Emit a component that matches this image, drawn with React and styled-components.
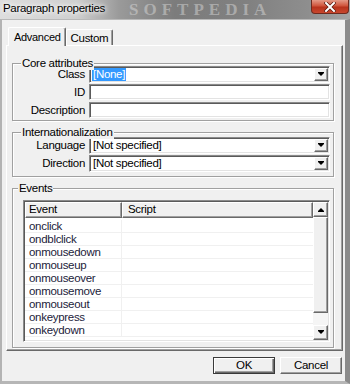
import React from 'react';
import styled, { createGlobalStyle } from 'styled-components';

const GlobalStyle = createGlobalStyle`
  html, body {
    margin: 0;
    padding: 0;
    background: #f0f0f0;
  }
  * {
    box-sizing: border-box;
  }
`;

// Window chrome
const Window = styled.div`
  width: 350px;
  height: 384px;
  display: flex;
  flex-direction: column;
  font-family: "Liberation Sans", Arial, sans-serif;
  font-size: 11px;
  letter-spacing: -0.3px;
  color: #000;
  overflow: hidden;
`;

const TitleBar = styled.div`
  height: 19px;
  flex: none;
  display: flex;
  align-items: flex-start;
  background: linear-gradient(90deg, #dedede 0%, #cfcfcf 22%, #9a9a9a 34%, #7c7c7c 50%, #808080 70%, #8e8e8e 88%, #a4a4a4 100%);
  overflow: hidden;
`;

const Title = styled.span`
  font-size: 11.5px;
  letter-spacing: -0.3px;
  line-height: 16px;
  padding-left: 3px;
  color: #000;
  text-shadow: 0 0 4px #fff, 0 0 6px #fff;
  white-space: nowrap;
`;

const Watermark = styled.span`
  margin-left: 24px;
  font-family: "Liberation Serif", serif;
  font-weight: bold;
  font-size: 17px;
  line-height: 19px;
  letter-spacing: 5px;
  color: rgba(225, 225, 225, 0.45);
  white-space: nowrap;
`;

const CloseButton = styled.div`
  margin-left: auto;
  margin-right: 1px;
  width: 38px;
  height: 14px;
  border: 1px solid #6e2a1e;
  border-top: none;
  border-radius: 0 0 4px 4px;
  background: linear-gradient(180deg, #e49a87 0%, #d0553c 45%, #b8331c 55%, #c8472e 100%);
  display: flex;
  align-items: center;
  justify-content: center;
  flex: none;
`;

const Body = styled.div`
  flex: 1;
  display: flex;
  flex-direction: column;
  background: #f0f0f0;
  border-top: 1px solid #b9b9b9;
  border-left: 2px solid #b3b3b3;
  border-right: 5px solid #8b8b8b;
  border-bottom: 3px solid #b6b6b6;
  padding: 7px 2px 0 4px;
  min-height: 0;
`;

// Tabs
const TabRow = styled.div`
  display: flex;
  align-items: flex-end;
  height: 18px;
  padding-left: 2px;
  position: relative;
  z-index: 1;
`;

const Tab = styled.div`
  height: ${p => (p.$active ? '19px' : '16px')};
  margin-bottom: ${p => (p.$active ? '-1px' : '0')};
  padding: ${p => (p.$active ? '2px 4px 0 5px' : '1px 4px 0 4px')};
  background: #f0f0f0;
  border-top: 1px solid #fff;
  border-left: 1px solid #fff;
  border-right: 1px solid #696969;
  box-shadow: inset -1px 0 0 #a0a0a0;
  border-radius: 2px 2px 0 0;
  line-height: 14px;
  font-size: ${p => (p.$active ? '11px' : '11.5px')};
  white-space: nowrap;
`;

const Panel = styled.div`
  flex: 1;
  display: flex;
  flex-direction: column;
  border: 1px solid;
  border-color: #fff #696969 #696969 #fff;
  box-shadow: inset -1px -1px 0 #a0a0a0;
  padding: 17px 8px 2px 5px;
  min-height: 0;
`;

// Group boxes
const GroupBox = styled.div`
  position: relative;
  border: 1px solid #a0a0a0;
  box-shadow: inset 1px 1px 0 #fff, 1px 1px 0 #fff;
  padding: ${p => p.$pad};
  margin-top: ${p => p.$gap || '0px'};
  display: flex;
  flex-direction: column;
  flex: ${p => (p.$grow ? 1 : 'none')};
  min-height: 0;
`;

const Caption = styled.span`
  position: absolute;
  top: -7px;
  left: ${p => p.$left || '7px'};
  padding: 0 1px 0 1px;
  background: #f0f0f0;
  line-height: 13px;
  font-size: 11.5px;
`;

const FormGrid = styled.div`
  display: grid;
  grid-template-columns: 72px 1fr;
  column-gap: 4px;
  row-gap: ${p => p.$rowGap || '1px'};
  align-items: center;
`;

const Label = styled.label`
  text-align: right;
  font-size: 11.5px;
  line-height: 13px;
  white-space: nowrap;
`;

const FieldBox = styled.div`
  height: ${p => p.$h || '17px'};
  background: #fff;
  border: 1px solid;
  border-color: #8a8a8a #fff #fff #8a8a8a;
  box-shadow: inset 1px 1px 0 #5a5a5a, inset -1px -1px 0 #e3e3e3;
  display: flex;
  align-items: center;
  padding: 0 1px 0 2px;
  font-size: 11.5px;
  line-height: 13px;
  white-space: nowrap;
  overflow: hidden;
`;

const Highlight = styled.span`
  background: #3399ff;
  color: #fff;
  padding: 0 1px;
`;

const FieldText = styled.span`
  flex: 1;
  padding-left: 1px;
`;

const DropButton = styled.div`
  margin-left: auto;
  width: 14px;
  height: 13px;
  flex: none;
  background: #f0f0f0;
  border: 1px solid;
  border-color: #fff #696969 #696969 #fff;
  box-shadow: inset -1px -1px 0 #a0a0a0;
  display: flex;
  align-items: center;
  justify-content: center;
`;

const Arrow = styled.span`
  width: 0;
  height: 0;
  border-left: 3px solid transparent;
  border-right: 3px solid transparent;
  ${p => (p.$up ? 'border-bottom: 3px solid #000;' : 'border-top: 3px solid #000;')}
  position: relative;
  &::after {
    content: '';
    position: absolute;
    left: -3px;
    ${p => (p.$up ? 'top: 3px;' : 'top: -4px;')}
    width: 6px;
    height: 1px;
    background: #000;
  }
`;

// List view
const ListView = styled.div`
  flex: 1;
  display: flex;
  background: #fff;
  border: 1px solid;
  border-color: #8a8a8a #fff #fff #8a8a8a;
  box-shadow: inset 1px 1px 0 #5a5a5a, inset -1px -1px 0 #e3e3e3;
  padding: 1px;
  min-height: 0;
  overflow: hidden;
`;

const Table = styled.div`
  flex: 1;
  display: flex;
  flex-direction: column;
  min-width: 0;
`;

const HeaderRow = styled.div`
  display: grid;
  grid-template-columns: 97px 1fr;
  height: 16px;
  flex: none;
`;

const HeaderCell = styled.div`
  background: #f0f0f0;
  border: 1px solid;
  border-color: #fff #696969 #696969 #fff;
  box-shadow: inset -1px -1px 0 #a0a0a0;
  padding-left: ${p => p.$pl || '3px'};
  line-height: 13px;
  font-size: 11.5px;
`;

const Rows = styled.div`
  display: flex;
  flex-direction: column;
  padding-top: 2px;
`;

const Row = styled.div`
  display: grid;
  grid-template-columns: 97px 1fr;
  height: 13px;
  flex: none;
  border-bottom: 1px solid #f0f0f0;
`;

const Cell = styled.div`
  padding-left: 4px;
  line-height: 13px;
  font-size: 11.5px;
  color: #22223a;
  border-right: ${p => (p.$first ? '1px solid #f0f0f0' : 'none')};
  white-space: nowrap;
`;

const ScrollBar = styled.div`
  width: 15px;
  flex: none;
  display: flex;
  flex-direction: column;
  background: #f4f4f4;
`;

const ScrollButton = styled.div`
  height: 15px;
  flex: none;
  background: #f0f0f0;
  border: 1px solid;
  border-color: #fff #696969 #696969 #fff;
  box-shadow: inset -1px -1px 0 #a0a0a0;
  display: flex;
  align-items: center;
  justify-content: center;
`;

const Thumb = styled.div`
  height: ${p => p.$h}px;
  flex: none;
  background: #f0f0f0;
  border: 1px solid;
  border-color: #fff #696969 #696969 #fff;
  box-shadow: inset -1px -1px 0 #a0a0a0;
`;

const Track = styled.div`
  flex: 1;
  background: #f5f5f5;
`;

// Footer buttons
const Footer = styled.div`
  height: 30px;
  flex: none;
  display: flex;
  justify-content: flex-end;
  align-items: flex-start;
  gap: 5px;
  padding: 6px 1px 0 0;
`;

const Button = styled.button`
  width: 62px;
  height: 17px;
  padding: 0;
  font-family: "Liberation Sans", Arial, sans-serif;
  font-size: 11.5px;
  letter-spacing: -0.3px;
  line-height: 13px;
  color: #000;
  background: #f0f0f0;
  border: 1px solid;
  border-color: ${p => (p.$default ? '#3a3a3a' : '#fff #696969 #696969 #fff')};
  box-shadow: ${p =>
    p.$default
      ? 'inset 1px 1px 0 #fff, inset -1px -1px 0 #696969, inset -2px -2px 0 #a0a0a0'
      : 'inset -1px -1px 0 #a0a0a0'};
`;

const events = [
  'onclick',
  'ondblclick',
  'onmousedown',
  'onmouseup',
  'onmouseover',
  'onmousemove',
  'onmouseout',
  'onkeypress',
  'onkeydown',
];

const Select = ({ children }) => (
  <FieldBox>
    {children}
    <DropButton>
      <Arrow />
    </DropButton>
  </FieldBox>
);

export default function App() {
  return (
    <>
      <GlobalStyle />
      <Window>
        <TitleBar>
          <Title>Paragraph properties</Title>
          <Watermark>SOFTPEDIA</Watermark>
          <CloseButton>
            <svg width="12" height="10" viewBox="0 0 12 10">
              <path d="M2 1 L10 9 M10 1 L2 9" stroke="#5a1a10" strokeWidth="3.4" strokeLinecap="square" />
              <path d="M2 1 L10 9 M10 1 L2 9" stroke="#fff" strokeWidth="2" strokeLinecap="square" />
            </svg>
          </CloseButton>
        </TitleBar>
        <Body>
          <TabRow>
            <Tab $active>Advanced</Tab>
            <Tab>Custom</Tab>
          </TabRow>
          <Panel>
            <GroupBox $pad="2px 3px 2px 0">
              <Caption $left="8px">Core attributes</Caption>
              <FormGrid>
                <Label>Class</Label>
                <Select>
                  <Highlight>[None]</Highlight>
                </Select>
                <Label>ID</Label>
                <FieldBox $h="16px" />
                <Label style={{ marginTop: 1 }}>Description</Label>
                <FieldBox $h="16px" style={{ marginTop: 1 }} />
              </FormGrid>
            </GroupBox>
            <GroupBox $pad="4px 3px 4px 0" $gap="11px">
              <Caption $left="8px">Internationalization</Caption>
              <FormGrid $rowGap="1px">
                <Label>Language</Label>
                <Select>
                  <FieldText>[Not specified]</FieldText>
                </Select>
                <Label>Direction</Label>
                <Select>
                  <FieldText>[Not specified]</FieldText>
                </Select>
              </FormGrid>
            </GroupBox>
            <GroupBox $pad="11px 3px 5px 10px" $gap="11px" $grow>
              <Caption $left="5px">Events</Caption>
              <ListView>
                <Table>
                  <HeaderRow>
                    <HeaderCell>Event</HeaderCell>
                    <HeaderCell $pl="5px">Script</HeaderCell>
                  </HeaderRow>
                  <Rows>
                    {events.map(name => (
                      <Row key={name}>
                        <Cell $first>{name}</Cell>
                        <Cell />
                      </Row>
                    ))}
                  </Rows>
                </Table>
                <ScrollBar>
                  <ScrollButton>
                    <Arrow $up />
                  </ScrollButton>
                  <Thumb $h={96} />
                  <Track />
                  <ScrollButton>
                    <Arrow />
                  </ScrollButton>
                </ScrollBar>
              </ListView>
            </GroupBox>
          </Panel>
          <Footer>
            <Button $default>OK</Button>
            <Button>Cancel</Button>
          </Footer>
        </Body>
      </Window>
    </>
  );
}
